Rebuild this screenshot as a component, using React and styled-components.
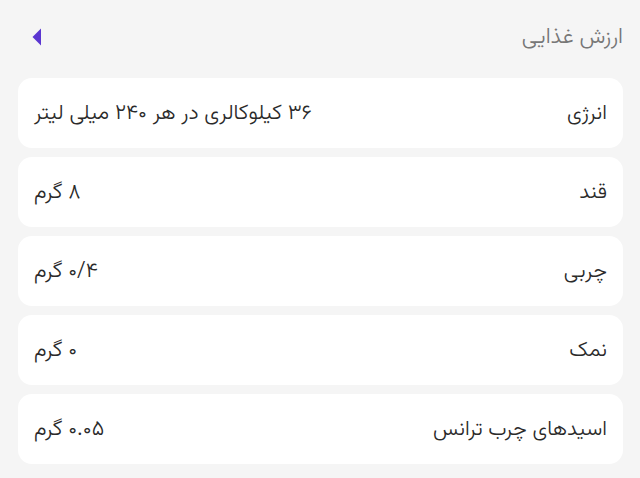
import React from 'react';
import styled, { createGlobalStyle } from 'styled-components';

const items = [
    { label: 'انرژی', value: '۳۶ کیلوکالری در هر ۲۴۰ میلی لیتر' },
    { label: 'قند', value: '۸ گرم' },
    { label: 'چربی', value: '۰/۴ گرم' },
    { label: 'نمک', value: '۰ گرم' },
    { label: 'اسیدهای چرب ترانس', value: '۰.۰۵ گرم' },
];

const App = () => {
    return <Page dir="rtl">
        <GlobalStyle />
        <Header>
            <Title>ارزش غذایی</Title>
            <BackButton aria-label="back">
                <svg width="10" height="18" viewBox="0 0 10 18">
                    <path d="M9 0.5 L0.5 9 L9 17.5 Z" fill="#5b36d1" />
                </svg>
            </BackButton>
        </Header>
        <List>
            {
                items.map((item, index) => {
                    return <Card key={index}>
                        <Label>{item.label}</Label>
                        <Value>{item.value}</Value>
                    </Card>
                })
            }
        </List>
    </Page>;
};

export default App;

const GlobalStyle = createGlobalStyle`
    html, body {
        margin:0;
        padding:0;
        background:#f5f5f5;
    }
    body {
        font-family:"Vazirmatn", "Noto Sans Arabic", "DejaVu Sans", sans-serif;
    }
`

const Page = styled.div`
    width:640px;
    height:478px;
    padding:0 17px 0 18px;
    box-sizing:border-box;
    background:#f5f5f5;
    overflow:hidden;
`

const Header = styled.div`
    height:78px;
    display:flex;
    align-items:center;
    justify-content:space-between;
    padding-bottom:4px;
    box-sizing:border-box;
`

const Title = styled.div`
    font-size:22px;
    font-weight:300;
    color:#777;
`

const BackButton = styled.div`
    display:flex;
    align-items:center;
    margin-left:14px;
`

const List = styled.div`
    display:flex;
    flex-direction:column;
    gap:9px;
`

const Card = styled.div`
    height:70px;
    background:#fff;
    border-radius:14px;
    display:flex;
    align-items:center;
    justify-content:space-between;
    padding:0 16px 0 16px;
    box-sizing:border-box;
`

const Label = styled.div`
    font-size:21px;
    font-weight:300;
    color:#2a2a2a;
`

const Value = styled.div`
    font-size:21.4px;
    font-weight:300;
    color:#2a2a2a;
`
